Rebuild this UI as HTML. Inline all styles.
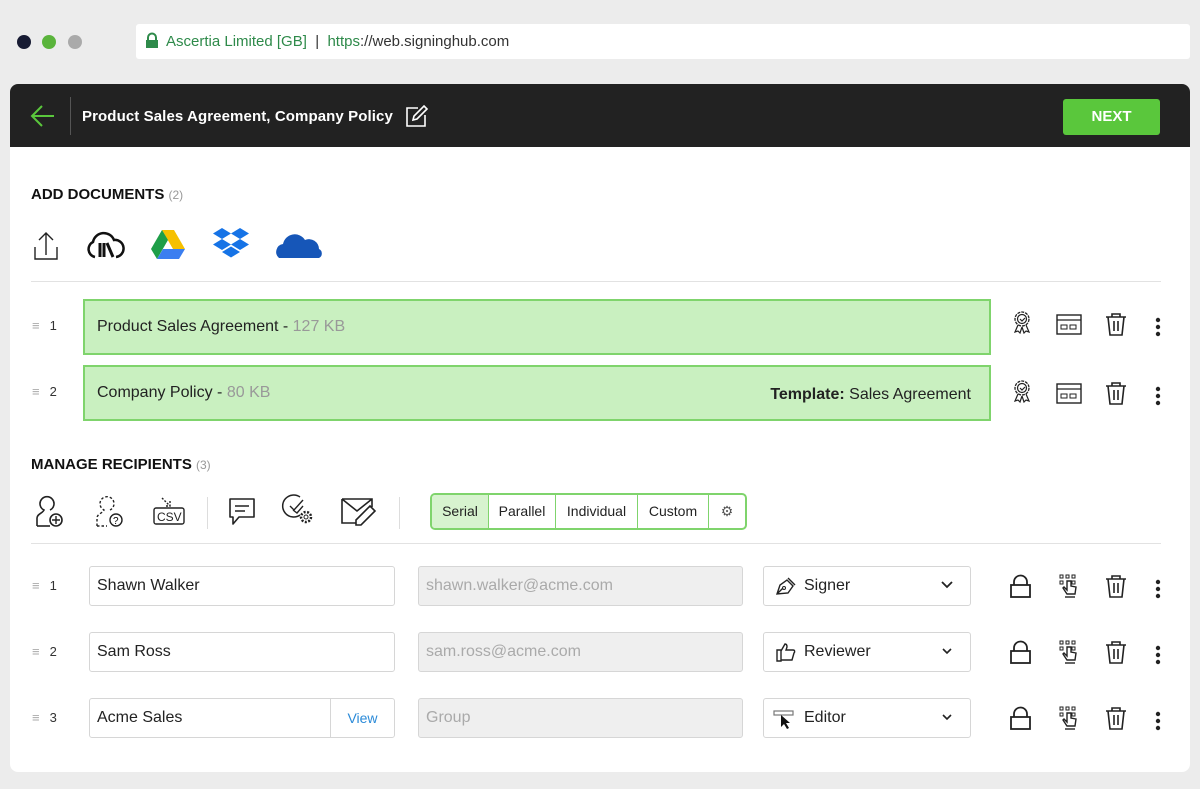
<!DOCTYPE html>
<html><head><meta charset="utf-8"><style>
*{box-sizing:border-box;margin:0;padding:0}
body{width:1200px;height:789px;background:#ececec;font-family:"Liberation Sans",sans-serif;position:relative;overflow:hidden;color:#222}
.a{position:absolute}
.dot{position:absolute;width:14px;height:14px;border-radius:50%;top:35px}
.card{position:absolute;left:10px;top:84px;width:1180px;height:688px;background:#fff;border-radius:8px;overflow:hidden}
.hdr{position:absolute;left:0;top:0;width:1180px;height:63px;background:#222}
.h{font-weight:bold;font-size:15px;color:#111}
.h span{font-weight:normal;color:#999;font-size:12px}
.hr{position:absolute;height:1px;background:#e2e2e2;left:21px;width:1130px}
.doc{position:absolute;left:73px;width:908px;height:56px;background:#c9f0c0;border:2px solid #7fd46c;font-size:16px;line-height:52px;padding-left:12px;color:#222}
.doc i{font-style:normal;color:#999}
.num{position:absolute;font-size:13px;color:#333}
.num b{color:#aaa;font-weight:normal;margin-right:10px}
.inp{position:absolute;height:40px;border:1px solid #d6d6d6;border-radius:3px;font-size:16px;line-height:38px;padding-left:7px}
.seg{position:absolute;left:420px;top:409px;width:317px;height:37px;border:2px solid #7fd46c;border-radius:5px;display:flex;font-size:14px;overflow:hidden}
.seg div{border-right:1.5px solid #7fd46c;line-height:33px;text-align:center}
.seg div:last-child{border:none}
svg{position:absolute;overflow:visible}
</style></head><body>
<div class="dot" style="left:17px;background:#171b33"></div>
<div class="dot" style="left:42px;background:#5ab43c"></div>
<div class="dot" style="left:68px;background:#aaa"></div>
<div class="a" style="left:136px;top:24px;width:1054px;height:35px;background:#fff;border-radius:3px"></div>
<svg style="left:145px;top:33px" width="14" height="16"><path d="M3 7V4.5a4 4 0 0 1 8 0V7" fill="none" stroke="#2e8a4a" stroke-width="2"/><rect x="1" y="7" width="12" height="8" fill="#2e8a4a"/></svg>
<div class="a" style="left:166px;top:33px;font-size:15px;color:#2e8a4a">Ascertia Limited [GB] <span style="color:#333">&nbsp;|&nbsp;</span> https<span style="color:#333">://web.signinghub.com</span></div>
<div class="card">
 <div class="hdr">
  <svg style="left:20px;top:20px" width="26" height="24"><path d="M24 12H2M12 2L2 12l10 10" fill="none" stroke="#5ac73c" stroke-width="2"/></svg>
  <div class="a" style="left:60px;top:13px;width:1px;height:38px;background:#555"></div>
  <div class="a" style="left:72px;top:24px;color:#fff;font-weight:bold;font-size:15px;letter-spacing:0.1px">Product Sales Agreement, Company Policy</div>
  <svg style="left:396px;top:21px" width="22" height="22"><path d="M12 3H1v18h18V10" fill="none" stroke="#fff" stroke-width="1.6"/><path d="M18 1l3 3-10 10-4 1 1-4z" fill="none" stroke="#fff" stroke-width="1.6"/></svg>
  <div class="a" style="left:1053px;top:15px;width:97px;height:36px;background:#5ac73c;border-radius:3px;color:#fff;font-weight:bold;font-size:15px;text-align:center;line-height:36px">NEXT</div>
 </div>
 <div class="a h" style="left:21px;top:102px">ADD DOCUMENTS <span>(2)</span></div>
 <svg style="left:24px;top:147px" width="24" height="30"><path d="M12 24V2M5 9l7-7 7 7M1 16v12h22V16" fill="none" stroke="#222" stroke-width="1.4"/></svg>
 <svg style="left:75px;top:145px" width="40" height="32"><path d="M10 28A8 8 0 0 1 8 13 11 11 0 0 1 29 11a8 8 0 0 1 2 17" fill="none" stroke="#111" stroke-width="2.5"/><path d="M15 28V14M19 28V14M22 14l6 14" stroke="#111" stroke-width="3" fill="none"/></svg>
 <svg style="left:141px;top:145px" width="34" height="30"><path d="M11 1h12l11 19H22z" fill="#f6c000"/><path d="M11 1l6 10-11 19L0 20z" fill="#1e9e48"/><path d="M6 30l6-10h22l-6 10z" fill="#3b7ef0"/></svg>
 <svg style="left:203px;top:143px" width="36" height="32"><g fill="#1673e6"><path d="M9 1l9 5.5-9 5.5L0 6.5z"/><path d="M27 1l9 5.5-9 5.5-9-5.5z"/><path d="M9 12l9 5.5-9 5.5L0 17.5z"/><path d="M27 12l9 5.5-9 5.5-9-5.5z"/><path d="M18 19.5l9 5.5-9 5.5-9-5.5z"/></g></svg>
 <svg style="left:265px;top:146px" width="48" height="30"><path d="M4 28a8 8 0 0 1 4-14 12 12 0 0 1 22-4 10 10 0 0 1 14 9 5 5 0 0 1 0 9z" fill="#1656b8"/></svg>
 <div class="hr" style="top:197px"></div>

 <div class="num" style="left:22px;top:234px"><b>≡</b>1</div>
 <div class="doc" style="top:215px">Product Sales Agreement - <i>127 KB</i></div>
 <div class="num" style="left:22px;top:300px"><b>≡</b>2</div>
 <div class="doc" style="top:281px">Company Policy - <i>80 KB</i><span class="a" style="right:18px;top:2px"><b>Template:</b> Sales Agreement</span></div>

 <div class="a h" style="left:21px;top:372px">MANAGE RECIPIENTS <span>(3)</span></div>
 <svg style="left:24px;top:413px" width="32" height="30"><path d="M3 29v-8c0-4 6-5 7-8a7 7 0 1 1 6 0" fill="none" stroke="#222" stroke-width="1.6"/><path d="M3 29h13" stroke="#222" stroke-width="1.6"/><circle cx="22" cy="23" r="6" fill="#fff" stroke="#222" stroke-width="1.6"/><path d="M22 19v8M18 23h8" stroke="#222" stroke-width="1.4"/></svg>
 <svg style="left:84px;top:413px" width="32" height="30"><path d="M3 29v-8c0-4 6-5 7-8a7 7 0 1 1 6 0M3 29h10" fill="none" stroke="#222" stroke-width="1.4" stroke-dasharray="2.5 2"/><circle cx="22" cy="23" r="6" fill="#fff" stroke="#222" stroke-width="1.4"/><text x="19" y="27" font-size="10" font-family="Liberation Sans">?</text></svg>
 <svg style="left:142px;top:412px" width="36" height="30"><path d="M10 2l8 8M18 5v5h-5" fill="none" stroke="#222" stroke-width="1.4" stroke-dasharray="2 1.5"/><rect x="2" y="12" width="30" height="16" rx="2" fill="none" stroke="#222" stroke-width="1.4"/><text x="5" y="25" font-size="12" font-family="Liberation Sans" fill="#222">CSV</text></svg>
 <div class="a" style="left:197px;top:413px;width:1px;height:32px;background:#ddd"></div>
 <svg style="left:217px;top:413px" width="30" height="30"><path d="M3 2h24v18H12l-6 7v-7H3z" fill="none" stroke="#222" stroke-width="1.6" stroke-linejoin="round"/><path d="M8 9h14M8 14h10" stroke="#222" stroke-width="1.4"/></svg>
 <svg style="left:273px;top:410px" width="32" height="32"><path d="M17 3a11 11 0 1 0 0 18" fill="none" stroke="#222" stroke-width="1.5"/><path d="M7 12l4 4 9-10M10 16l4 3 6-7" fill="none" stroke="#222" stroke-width="1.4"/><circle cx="23" cy="23" r="5" fill="none" stroke="#222" stroke-width="2.5" stroke-dasharray="2 1.5"/><circle cx="23" cy="23" r="2" fill="none" stroke="#222" stroke-width="1"/></svg>
 <svg style="left:330px;top:410px" width="38" height="34"><path d="M2 5h30v8M2 5v24h14M2 5l15 12 15-12" fill="none" stroke="#222" stroke-width="1.6"/><path d="M30 12l5 5-14 14h-5v-5z" fill="#fff" stroke="#222" stroke-width="1.6"/></svg>
 <div class="a" style="left:389px;top:413px;width:1px;height:32px;background:#ddd"></div>
 <div class="seg"><div style="background:#d7f3cf;width:57px">Serial</div><div style="width:67px">Parallel</div><div style="width:82px">Individual</div><div style="width:71px">Custom</div><div style="color:#555;flex:1">⚙</div></div>
 <div class="hr" style="top:459px"></div>

 <div class="num" style="left:22px;top:494px"><b>≡</b>1</div>
 <div class="inp" style="left:79px;top:482px;width:306px">Shawn Walker</div>
 <div class="inp" style="left:408px;top:482px;width:325px;background:#efefef;color:#aaa">shawn.walker@acme.com</div>
 <div class="num" style="left:22px;top:560px"><b>≡</b>2</div>
 <div class="inp" style="left:79px;top:548px;width:306px">Sam Ross</div>
 <div class="inp" style="left:408px;top:548px;width:325px;background:#efefef;color:#aaa">sam.ross@acme.com</div>
 <div class="num" style="left:22px;top:626px"><b>≡</b>3</div>
 <div class="inp" style="left:79px;top:614px;width:306px">Acme Sales<span class="a" style="left:240px;top:0;height:38px;width:64px;border-left:1px solid #d6d6d6;text-align:center;color:#2a8ad8;font-size:14px">View</span></div>
 <div class="inp" style="left:408px;top:614px;width:325px;background:#efefef;color:#aaa">Group</div>

 <div class="inp" style="left:753px;top:482px;width:208px;padding-left:40px">Signer</div>
 <div class="inp" style="left:753px;top:548px;width:208px;padding-left:40px">Reviewer</div>
 <div class="inp" style="left:753px;top:614px;width:208px;padding-left:40px">Editor</div>
 <svg style="left:765px;top:492px" width="22" height="20"><path d="M2 18l3-9 7-5 6 6-5 7z M2 18l6-6" fill="none" stroke="#222" stroke-width="1.4"/><circle cx="9" cy="12" r="1.5" fill="none" stroke="#222"/><path d="M13 2l7 7" stroke="#222" stroke-width="1.4"/></svg>
 <svg style="left:765px;top:557px" width="22" height="22"><path d="M2 9h4v11H2zM6 10l4-7c2 0 2 2 2 3l-1 3h7c2 0 2 2 1 3l-2 7H6" fill="none" stroke="#222" stroke-width="1.4"/></svg>
 <svg style="left:763px;top:624px" width="22" height="22"><rect x="1" y="3" width="19" height="4" fill="none" stroke="#777" stroke-width="1.2"/><path d="M8 7l0 12 3-3 3 5 2-1-3-5h4z" fill="#111"/></svg>
 <svg style="left:931px;top:497px" width="12" height="8"><path d="M1 1l5 5 5-5" fill="none" stroke="#222" stroke-width="1.8"/></svg>
 <svg style="left:932px;top:564px" width="10" height="7"><path d="M1 1l4 4 4-4" fill="none" stroke="#222" stroke-width="1.6"/></svg>
 <svg style="left:932px;top:630px" width="10" height="7"><path d="M1 1l4 4 4-4" fill="none" stroke="#222" stroke-width="1.6"/></svg>

 <svg width="0" height="0"><defs>
  <g id="rib"><circle cx="10" cy="9" r="7" fill="none" stroke="#222" stroke-width="1.3" stroke-dasharray="3 1"/><circle cx="10" cy="9" r="4.5" fill="none" stroke="#222" stroke-width="1.2"/><path d="M8 9l2 2 3-3M6 15l-3 7 3-1 2 2 2-6M14 15l3 7-3-1-2 2-2-6" fill="none" stroke="#222" stroke-width="1.2"/></g>
  <g id="win"><rect x="1" y="1" width="24" height="19" fill="none" stroke="#222" stroke-width="1.4"/><path d="M1 6h24" stroke="#222" stroke-width="1.2"/><rect x="5" y="11" width="6" height="4" fill="none" stroke="#222"/><rect x="14" y="11" width="6" height="4" fill="none" stroke="#222"/></g>
  <g id="bin"><path d="M1 4h20M7 4V1h8v3M3 4l2 18h12l2-18M9 8v10M13 8v10" fill="none" stroke="#222" stroke-width="1.6"/></g>
  <g id="dots"><circle cx="3" cy="3" r="2.2" fill="#222"/><circle cx="3" cy="10" r="2.2" fill="#222"/><circle cx="3" cy="17" r="2.2" fill="#222"/></g>
  <g id="lock"><path d="M4 10V7a6.5 6.5 0 0 1 13 0v3" fill="none" stroke="#222" stroke-width="1.8"/><rect x="1" y="10" width="19" height="12" fill="none" stroke="#222" stroke-width="1.8"/></g>
  <g id="hand"><g fill="none" stroke="#222" stroke-width="1"><rect x="1" y="1" width="3" height="3"/><rect x="7" y="1" width="3" height="3"/><rect x="13" y="1" width="3" height="3"/><rect x="1" y="7" width="3" height="3"/><rect x="13" y="7" width="3" height="3"/></g><path d="M8 7v9l-3-3-1 1 4 6h8l1-7-5-1V7z" fill="#fff" stroke="#222" stroke-width="1.4"/><path d="M6 23h10" stroke="#222" stroke-width="1.4"/></g>
 </defs></svg>
 <svg style="left:1002px;top:226px" width="22" height="26"><use href="#rib"/></svg>
 <svg style="left:1046px;top:230px" width="26" height="22"><use href="#win"/></svg>
 <svg style="left:1095px;top:229px" width="22" height="24"><use href="#bin"/></svg>
 <svg style="left:1145px;top:233px" width="6" height="20"><use href="#dots"/></svg>
 <svg style="left:1002px;top:295px" width="22" height="26"><use href="#rib"/></svg>
 <svg style="left:1046px;top:299px" width="26" height="22"><use href="#win"/></svg>
 <svg style="left:1095px;top:298px" width="22" height="24"><use href="#bin"/></svg>
 <svg style="left:1145px;top:302px" width="6" height="20"><use href="#dots"/></svg>

 <svg style="left:1000px;top:491px" width="22" height="24"><use href="#lock"/></svg>
 <svg style="left:1049px;top:490px" width="20" height="26"><use href="#hand"/></svg>
 <svg style="left:1095px;top:491px" width="22" height="24"><use href="#bin"/></svg>
 <svg style="left:1145px;top:495px" width="6" height="20"><use href="#dots"/></svg>
 <svg style="left:1000px;top:557px" width="22" height="24"><use href="#lock"/></svg>
 <svg style="left:1049px;top:556px" width="20" height="26"><use href="#hand"/></svg>
 <svg style="left:1095px;top:557px" width="22" height="24"><use href="#bin"/></svg>
 <svg style="left:1145px;top:561px" width="6" height="20"><use href="#dots"/></svg>
 <svg style="left:1000px;top:623px" width="22" height="24"><use href="#lock"/></svg>
 <svg style="left:1049px;top:622px" width="20" height="26"><use href="#hand"/></svg>
 <svg style="left:1095px;top:623px" width="22" height="24"><use href="#bin"/></svg>
 <svg style="left:1145px;top:627px" width="6" height="20"><use href="#dots"/></svg>
</div>
</body></html>
